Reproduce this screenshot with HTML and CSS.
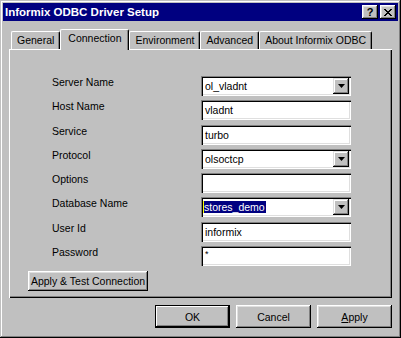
FILE: index.html
```html
<!DOCTYPE html>
<html lang="en">
<head>
  <meta charset="UTF-8" />
  <title>Informix ODBC Driver Setup</title>
  <link rel="stylesheet" href="styles.css">
</head>
<body>
  <div class="window">
    <div class="titlebar">
      <span class="title">Informix ODBC Driver Setup</span>
      <div class="caption">
        <span class="cap-btn help">?</span>
        <span class="cap-btn close">
          <svg width="8" height="7" viewBox="0 0 8 7"><path d="M0 0h2v1h1v1h2v-1h1v-1h2v1h-1v1h-1v1h-1v1h1v1h1v1h1v1h-2v-1h-1v-1h-2v1h-1v1h-2v-1h1v-1h1v-1h1v-1h-1v-1h-1v-1h-1z" fill="#000"/></svg>
        </span>
      </div>
    </div>

    <div class="tabs">
      <div class="tab">General</div>
      <div class="tab active">Connection</div>
      <div class="tab">Environment</div>
      <div class="tab">Advanced</div>
      <div class="tab">About Informix ODBC</div>
    </div>

    <div class="panel">
      <div class="form">
        <label>Server Name</label>
        <div class="field combo"><span>ol_vladnt</span><span class="drop"><svg width="7" height="4" viewBox="0 0 7 4"><path d="M0 0h7l-3.5 4z" fill="#000"/></svg></span></div>

        <label>Host Name</label>
        <div class="field"><span>vladnt</span></div>

        <label>Service</label>
        <div class="field"><span>turbo</span></div>

        <label>Protocol</label>
        <div class="field combo"><span>olsoctcp</span><span class="drop"><svg width="7" height="4" viewBox="0 0 7 4"><path d="M0 0h7l-3.5 4z" fill="#000"/></svg></span></div>

        <label>Options</label>
        <div class="field"></div>

        <label>Database Name</label>
        <div class="field combo"><span class="selected">stores_demo</span><span class="drop"><svg width="7" height="4" viewBox="0 0 7 4"><path d="M0 0h7l-3.5 4z" fill="#000"/></svg></span></div>

        <label>User Id</label>
        <div class="field"><span>informix</span></div>

        <label>Password</label>
        <div class="field"><span class="secret">*</span></div>
      </div>

      <button class="btn test">Apply &amp; Test Connection</button>
    </div>

    <div class="actions">
      <button class="btn default">OK</button>
      <button class="btn">Cancel</button>
      <button class="btn"><u>A</u>pply</button>
    </div>
  </div>
</body>
</html>
```

FILE: styles.css
```css
body {
  margin: 0;
  padding: 0;
  background: #c0c0c0;
}

.window {
  width: 401px;
  height: 338px;
  box-sizing: border-box;
  padding: 3px;
  background: #c0c0c0;
  box-shadow: inset -1px -1px #000, inset 1px 1px #c0c0c0, inset -2px -2px #808080, inset 2px 2px #fff;
  font-family: "Liberation Sans", Arial, sans-serif;
  font-size: 10.5px;
  color: #000;
  display: flex;
  flex-direction: column;
}

.titlebar {
  height: 18px;
  background: #000080;
  color: #fff;
  display: flex;
  align-items: center;
  justify-content: space-between;
  padding: 0 2px;
}

.title {
  font-weight: bold;
  font-size: 11.5px;
}

.caption {
  display: flex;
  gap: 2px;
}

.cap-btn {
  width: 16px;
  height: 14px;
  box-sizing: border-box;
  background: #c0c0c0;
  color: #000;
  box-shadow: inset -1px -1px #000, inset 1px 1px #fff, inset -2px -2px #808080, inset 2px 2px #dfdfdf;
  display: flex;
  align-items: center;
  justify-content: center;
  font-weight: bold;
  font-size: 11px;
  line-height: 11px;
}

.tabs {
  display: flex;
  align-items: flex-end;
  height: 20px;
  margin: 8px 0 0 8px;
  position: relative;
  z-index: 1;
}

.tab {
  height: 18px;
  box-sizing: border-box;
  padding: 2px 5px 0;
  line-height: 12px;
  border: 1px solid #fff;
  border-right-color: #000;
  border-bottom: none;
  border-radius: 2px 2px 0 0;
  box-shadow: inset -1px 0 #808080;
  background: #c0c0c0;
}

.tab.active {
  height: 21px;
  margin-bottom: -1px;
  padding: 2px 7px 0;
}

.panel {
  margin-left: 6px;
  width: 383px;
  height: 249px;
  box-sizing: border-box;
  padding: 27px 0 0 43px;
  box-shadow: inset 1px 1px #fff, inset -1px -1px #000, inset -2px -2px #808080;
}

.form {
  display: grid;
  grid-template-columns: 149px 150px;
  grid-auto-rows: 20px;
  row-gap: 4.3px;
}

.form label {
  line-height: 13px;
}

.field {
  height: 20px;
  box-sizing: border-box;
  padding: 0 2px 0 4px;
  background: #fff;
  box-shadow: inset 1px 1px #808080, inset 2px 2px #000, inset -1px -1px #fff, inset -2px -2px #dfdfdf;
  display: flex;
  align-items: center;
}

.drop {
  margin-left: auto;
  width: 16px;
  height: 16px;
  box-sizing: border-box;
  background: #c0c0c0;
  box-shadow: inset -1px -1px #000, inset 1px 1px #dfdfdf, inset -2px -2px #808080, inset 2px 2px #fff;
  display: flex;
  align-items: center;
  justify-content: center;
}

.selected {
  margin-left: -2px;
  padding-right: 1px;
  background: #000080;
  color: #fff;
  border-left: 1px solid #ffff00;
}

.secret {
  font-size: 9px;
  align-self: flex-start;
  margin-top: 3px;
}

.btn {
  font-family: inherit;
  font-size: 10.5px;
  color: #000;
  background: #c0c0c0;
  border: none;
  padding: 0;
  box-shadow: inset -1px -1px #000, inset 1px 1px #fff, inset -2px -2px #808080, inset 2px 2px #dfdfdf;
}

.btn.test {
  display: block;
  width: 120px;
  height: 20px;
  margin: 5px 0 0 -24px;
}

.actions {
  display: flex;
  justify-content: flex-end;
  gap: 6px;
  margin: 7px 6px 0 0;
}

.actions .btn {
  width: 75px;
  height: 23px;
}

.btn.default {
  box-shadow: inset 0 0 0 1px #000, inset -2px -2px #000, inset 2px 2px #fff, inset -3px -3px #808080;
}
```
